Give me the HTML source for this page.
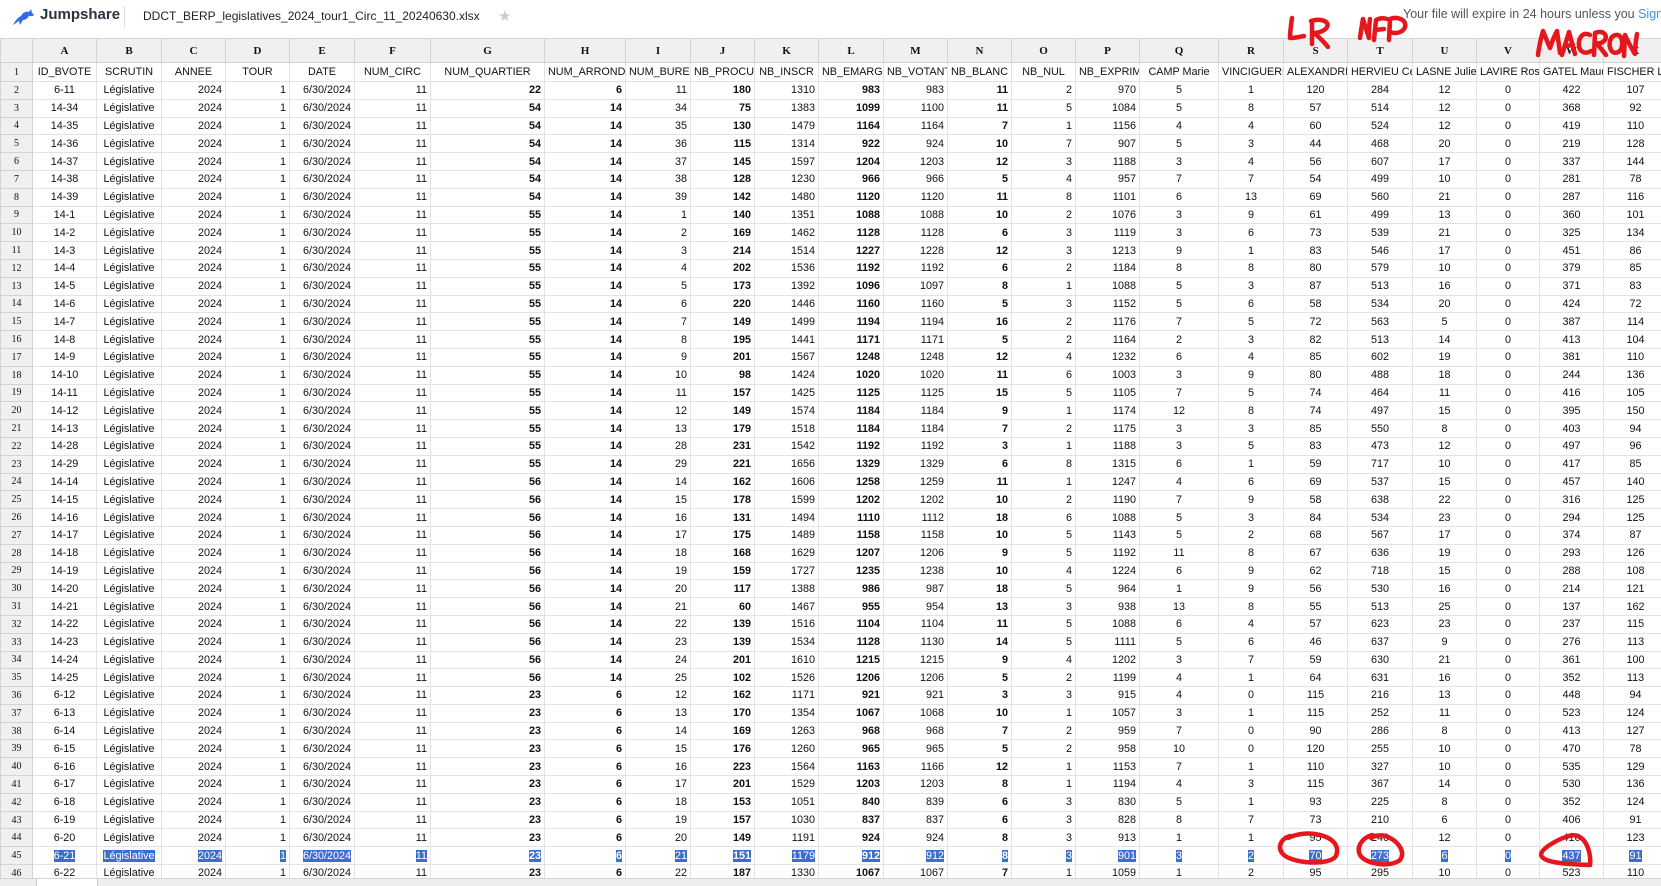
<!DOCTYPE html>
<html><head><meta charset="utf-8">
<style>
html,body{margin:0;padding:0;width:1661px;height:885px;overflow:hidden;background:#fff;font-family:"Liberation Sans",sans-serif;}
#top{position:absolute;left:0;top:0;width:1661px;height:37px;background:#fff;}
#logo{position:absolute;left:40px;top:6px;font-size:15px;font-weight:bold;color:#2a3340;}
#div{position:absolute;left:124px;top:6px;width:1px;height:22px;background:#ddd;}
#fname{position:absolute;left:143px;top:9px;font-size:12px;color:#222;}
#star{position:absolute;left:498px;top:7px;font-size:15px;color:#ccc;}
#exp{position:absolute;left:1403px;top:7px;font-size:12.5px;color:#555;white-space:nowrap;}
#exp span{color:#4a90e2;}
#grid{position:absolute;left:0;top:38px;width:1661px;height:840px;overflow:hidden;}
table{border-collapse:collapse;table-layout:fixed;width:1667px;}
td,th{border:1px solid #e3e3e3;padding:0 3px;font-size:10.8px;white-space:nowrap;overflow:hidden;color:#111;font-weight:normal;}
tr{height:17.8px;}
tr.h{height:24px;}
tr.h th{background:#f0f0f0;border:1px solid #d3d3d3;font-family:"Liberation Serif",serif;font-weight:bold;font-size:11px;}
tr.r1{height:19px;}
th{background:#f0f0f0;border-color:#d3d3d3;font-family:"Liberation Serif",serif;font-size:10px;text-align:center;}
td:nth-child(2),td:nth-child(3){text-align:center;}
td{text-align:right;}
td:nth-child(n+18){text-align:center;}
td:nth-child(8),td:nth-child(9),td:nth-child(11),td:nth-child(13),td:nth-child(15){font-weight:bold;}
tr.r1 td{text-align:center;font-weight:normal;}
tr.s td span{background:#3a6fd1;color:#fff;}
#tabs{position:absolute;left:0;top:878px;width:1661px;height:7px;background:#eee;border-top:1px solid #d3d3d3;}
#tab{position:absolute;left:36px;top:0;width:60px;height:7px;background:#fff;border-left:1px solid #ccc;border-right:1px solid #ccc;}
svg.ann{position:absolute;left:0;top:0;width:1661px;height:885px;pointer-events:none;}
</style></head><body>
<div id="top">
<svg style="position:absolute;left:11px;top:7px" width="24" height="20" viewBox="0 0 24 20"><path d="M2 18 C5 12 8 10 10 9 C12 5 16 4 18 5 L20 2 L21 6 C23 7 23 8 22 9 L18 9 C16 12 14 13 12 13 L9 18 L8 14 C6 15 4 17 2 18 Z" fill="#2f6fe0"/></svg>
<div id="logo">Jumpshare</div>
<div id="div"></div>
<div id="fname">DDCT_BERP_legislatives_2024_tour1_Circ_11_20240630.xlsx</div>
<div id="star">★</div>
<div id="exp">Your file will expire in 24 hours unless you <span>Sign Up</span></div>
</div>
<div id="grid">
<table>
<colgroup><col style="width:32px"><col style="width:64px"><col style="width:65px"><col style="width:64px"><col style="width:64px"><col style="width:65px"><col style="width:76px"><col style="width:114px"><col style="width:81px"><col style="width:65px"><col style="width:64px"><col style="width:64px"><col style="width:65px"><col style="width:64px"><col style="width:64px"><col style="width:64px"><col style="width:64px"><col style="width:79px"><col style="width:65px"><col style="width:64px"><col style="width:65px"><col style="width:64px"><col style="width:63px"><col style="width:64px"><col style="width:64px"></colgroup>
<tr class="h"><th></th><th>A</th><th>B</th><th>C</th><th>D</th><th>E</th><th>F</th><th>G</th><th>H</th><th>I</th><th>J</th><th>K</th><th>L</th><th>M</th><th>N</th><th>O</th><th>P</th><th>Q</th><th>R</th><th>S</th><th>T</th><th>U</th><th>V</th><th>W</th><th>X</th></tr>
<tr class="r1"><th>1</th><td>ID_BVOTE<td>SCRUTIN<td>ANNEE<td>TOUR<td>DATE<td>NUM_CIRC<td>NUM_QUARTIER<td>NUM_ARROND<td>NUM_BUREA<td>NB_PROCU<td>NB_INSCR<td>NB_EMARG<td>NB_VOTANT<td>NB_BLANC<td>NB_NUL<td>NB_EXPRIM<td>CAMP Marie<td>VINCIGUERR<td>ALEXANDRE<td>HERVIEU Cél<td>LASNE Julie<td>LAVIRE Rose<td>GATEL Maud<td>FISCHER Lind</tr>
<tr><th>2</th><td>6-11<td>Législative<td>2024<td>1<td>6/30/2024<td>11<td>22<td>6<td>11<td>180<td>1310<td>983<td>983<td>11<td>2<td>970<td>5<td>1<td>120<td>284<td>12<td>0<td>422<td>107</tr>
<tr><th>3</th><td>14-34<td>Législative<td>2024<td>1<td>6/30/2024<td>11<td>54<td>14<td>34<td>75<td>1383<td>1099<td>1100<td>11<td>5<td>1084<td>5<td>8<td>57<td>514<td>12<td>0<td>368<td>92</tr>
<tr><th>4</th><td>14-35<td>Législative<td>2024<td>1<td>6/30/2024<td>11<td>54<td>14<td>35<td>130<td>1479<td>1164<td>1164<td>7<td>1<td>1156<td>4<td>4<td>60<td>524<td>12<td>0<td>419<td>110</tr>
<tr><th>5</th><td>14-36<td>Législative<td>2024<td>1<td>6/30/2024<td>11<td>54<td>14<td>36<td>115<td>1314<td>922<td>924<td>10<td>7<td>907<td>5<td>3<td>44<td>468<td>20<td>0<td>219<td>128</tr>
<tr><th>6</th><td>14-37<td>Législative<td>2024<td>1<td>6/30/2024<td>11<td>54<td>14<td>37<td>145<td>1597<td>1204<td>1203<td>12<td>3<td>1188<td>3<td>4<td>56<td>607<td>17<td>0<td>337<td>144</tr>
<tr><th>7</th><td>14-38<td>Législative<td>2024<td>1<td>6/30/2024<td>11<td>54<td>14<td>38<td>128<td>1230<td>966<td>966<td>5<td>4<td>957<td>7<td>7<td>54<td>499<td>10<td>0<td>281<td>78</tr>
<tr><th>8</th><td>14-39<td>Législative<td>2024<td>1<td>6/30/2024<td>11<td>54<td>14<td>39<td>142<td>1480<td>1120<td>1120<td>11<td>8<td>1101<td>6<td>13<td>69<td>560<td>21<td>0<td>287<td>116</tr>
<tr><th>9</th><td>14-1<td>Législative<td>2024<td>1<td>6/30/2024<td>11<td>55<td>14<td>1<td>140<td>1351<td>1088<td>1088<td>10<td>2<td>1076<td>3<td>9<td>61<td>499<td>13<td>0<td>360<td>101</tr>
<tr><th>10</th><td>14-2<td>Législative<td>2024<td>1<td>6/30/2024<td>11<td>55<td>14<td>2<td>169<td>1462<td>1128<td>1128<td>6<td>3<td>1119<td>3<td>6<td>73<td>539<td>21<td>0<td>325<td>134</tr>
<tr><th>11</th><td>14-3<td>Législative<td>2024<td>1<td>6/30/2024<td>11<td>55<td>14<td>3<td>214<td>1514<td>1227<td>1228<td>12<td>3<td>1213<td>9<td>1<td>83<td>546<td>17<td>0<td>451<td>86</tr>
<tr><th>12</th><td>14-4<td>Législative<td>2024<td>1<td>6/30/2024<td>11<td>55<td>14<td>4<td>202<td>1536<td>1192<td>1192<td>6<td>2<td>1184<td>8<td>8<td>80<td>579<td>10<td>0<td>379<td>85</tr>
<tr><th>13</th><td>14-5<td>Législative<td>2024<td>1<td>6/30/2024<td>11<td>55<td>14<td>5<td>173<td>1392<td>1096<td>1097<td>8<td>1<td>1088<td>5<td>3<td>87<td>513<td>16<td>0<td>371<td>83</tr>
<tr><th>14</th><td>14-6<td>Législative<td>2024<td>1<td>6/30/2024<td>11<td>55<td>14<td>6<td>220<td>1446<td>1160<td>1160<td>5<td>3<td>1152<td>5<td>6<td>58<td>534<td>20<td>0<td>424<td>72</tr>
<tr><th>15</th><td>14-7<td>Législative<td>2024<td>1<td>6/30/2024<td>11<td>55<td>14<td>7<td>149<td>1499<td>1194<td>1194<td>16<td>2<td>1176<td>7<td>5<td>72<td>563<td>5<td>0<td>387<td>114</tr>
<tr><th>16</th><td>14-8<td>Législative<td>2024<td>1<td>6/30/2024<td>11<td>55<td>14<td>8<td>195<td>1441<td>1171<td>1171<td>5<td>2<td>1164<td>2<td>3<td>82<td>513<td>14<td>0<td>413<td>104</tr>
<tr><th>17</th><td>14-9<td>Législative<td>2024<td>1<td>6/30/2024<td>11<td>55<td>14<td>9<td>201<td>1567<td>1248<td>1248<td>12<td>4<td>1232<td>6<td>4<td>85<td>602<td>19<td>0<td>381<td>110</tr>
<tr><th>18</th><td>14-10<td>Législative<td>2024<td>1<td>6/30/2024<td>11<td>55<td>14<td>10<td>98<td>1424<td>1020<td>1020<td>11<td>6<td>1003<td>3<td>9<td>80<td>488<td>18<td>0<td>244<td>136</tr>
<tr><th>19</th><td>14-11<td>Législative<td>2024<td>1<td>6/30/2024<td>11<td>55<td>14<td>11<td>157<td>1425<td>1125<td>1125<td>15<td>5<td>1105<td>7<td>5<td>74<td>464<td>11<td>0<td>416<td>105</tr>
<tr><th>20</th><td>14-12<td>Législative<td>2024<td>1<td>6/30/2024<td>11<td>55<td>14<td>12<td>149<td>1574<td>1184<td>1184<td>9<td>1<td>1174<td>12<td>8<td>74<td>497<td>15<td>0<td>395<td>150</tr>
<tr><th>21</th><td>14-13<td>Législative<td>2024<td>1<td>6/30/2024<td>11<td>55<td>14<td>13<td>179<td>1518<td>1184<td>1184<td>7<td>2<td>1175<td>3<td>3<td>85<td>550<td>8<td>0<td>403<td>94</tr>
<tr><th>22</th><td>14-28<td>Législative<td>2024<td>1<td>6/30/2024<td>11<td>55<td>14<td>28<td>231<td>1542<td>1192<td>1192<td>3<td>1<td>1188<td>3<td>5<td>83<td>473<td>12<td>0<td>497<td>96</tr>
<tr><th>23</th><td>14-29<td>Législative<td>2024<td>1<td>6/30/2024<td>11<td>55<td>14<td>29<td>221<td>1656<td>1329<td>1329<td>6<td>8<td>1315<td>6<td>1<td>59<td>717<td>10<td>0<td>417<td>85</tr>
<tr><th>24</th><td>14-14<td>Législative<td>2024<td>1<td>6/30/2024<td>11<td>56<td>14<td>14<td>162<td>1606<td>1258<td>1259<td>11<td>1<td>1247<td>4<td>6<td>69<td>537<td>15<td>0<td>457<td>140</tr>
<tr><th>25</th><td>14-15<td>Législative<td>2024<td>1<td>6/30/2024<td>11<td>56<td>14<td>15<td>178<td>1599<td>1202<td>1202<td>10<td>2<td>1190<td>7<td>9<td>58<td>638<td>22<td>0<td>316<td>125</tr>
<tr><th>26</th><td>14-16<td>Législative<td>2024<td>1<td>6/30/2024<td>11<td>56<td>14<td>16<td>131<td>1494<td>1110<td>1112<td>18<td>6<td>1088<td>5<td>3<td>84<td>534<td>23<td>0<td>294<td>125</tr>
<tr><th>27</th><td>14-17<td>Législative<td>2024<td>1<td>6/30/2024<td>11<td>56<td>14<td>17<td>175<td>1489<td>1158<td>1158<td>10<td>5<td>1143<td>5<td>2<td>68<td>567<td>17<td>0<td>374<td>87</tr>
<tr><th>28</th><td>14-18<td>Législative<td>2024<td>1<td>6/30/2024<td>11<td>56<td>14<td>18<td>168<td>1629<td>1207<td>1206<td>9<td>5<td>1192<td>11<td>8<td>67<td>636<td>19<td>0<td>293<td>126</tr>
<tr><th>29</th><td>14-19<td>Législative<td>2024<td>1<td>6/30/2024<td>11<td>56<td>14<td>19<td>159<td>1727<td>1235<td>1238<td>10<td>4<td>1224<td>6<td>9<td>62<td>718<td>15<td>0<td>288<td>108</tr>
<tr><th>30</th><td>14-20<td>Législative<td>2024<td>1<td>6/30/2024<td>11<td>56<td>14<td>20<td>117<td>1388<td>986<td>987<td>18<td>5<td>964<td>1<td>9<td>56<td>530<td>16<td>0<td>214<td>121</tr>
<tr><th>31</th><td>14-21<td>Législative<td>2024<td>1<td>6/30/2024<td>11<td>56<td>14<td>21<td>60<td>1467<td>955<td>954<td>13<td>3<td>938<td>13<td>8<td>55<td>513<td>25<td>0<td>137<td>162</tr>
<tr><th>32</th><td>14-22<td>Législative<td>2024<td>1<td>6/30/2024<td>11<td>56<td>14<td>22<td>139<td>1516<td>1104<td>1104<td>11<td>5<td>1088<td>6<td>4<td>57<td>623<td>23<td>0<td>237<td>115</tr>
<tr><th>33</th><td>14-23<td>Législative<td>2024<td>1<td>6/30/2024<td>11<td>56<td>14<td>23<td>139<td>1534<td>1128<td>1130<td>14<td>5<td>1111<td>5<td>6<td>46<td>637<td>9<td>0<td>276<td>113</tr>
<tr><th>34</th><td>14-24<td>Législative<td>2024<td>1<td>6/30/2024<td>11<td>56<td>14<td>24<td>201<td>1610<td>1215<td>1215<td>9<td>4<td>1202<td>3<td>7<td>59<td>630<td>21<td>0<td>361<td>100</tr>
<tr><th>35</th><td>14-25<td>Législative<td>2024<td>1<td>6/30/2024<td>11<td>56<td>14<td>25<td>102<td>1526<td>1206<td>1206<td>5<td>2<td>1199<td>4<td>1<td>64<td>631<td>16<td>0<td>352<td>113</tr>
<tr><th>36</th><td>6-12<td>Législative<td>2024<td>1<td>6/30/2024<td>11<td>23<td>6<td>12<td>162<td>1171<td>921<td>921<td>3<td>3<td>915<td>4<td>0<td>115<td>216<td>13<td>0<td>448<td>94</tr>
<tr><th>37</th><td>6-13<td>Législative<td>2024<td>1<td>6/30/2024<td>11<td>23<td>6<td>13<td>170<td>1354<td>1067<td>1068<td>10<td>1<td>1057<td>3<td>1<td>115<td>252<td>11<td>0<td>523<td>124</tr>
<tr><th>38</th><td>6-14<td>Législative<td>2024<td>1<td>6/30/2024<td>11<td>23<td>6<td>14<td>169<td>1263<td>968<td>968<td>7<td>2<td>959<td>7<td>0<td>90<td>286<td>8<td>0<td>413<td>127</tr>
<tr><th>39</th><td>6-15<td>Législative<td>2024<td>1<td>6/30/2024<td>11<td>23<td>6<td>15<td>176<td>1260<td>965<td>965<td>5<td>2<td>958<td>10<td>0<td>120<td>255<td>10<td>0<td>470<td>78</tr>
<tr><th>40</th><td>6-16<td>Législative<td>2024<td>1<td>6/30/2024<td>11<td>23<td>6<td>16<td>223<td>1564<td>1163<td>1166<td>12<td>1<td>1153<td>7<td>1<td>110<td>327<td>10<td>0<td>535<td>129</tr>
<tr><th>41</th><td>6-17<td>Législative<td>2024<td>1<td>6/30/2024<td>11<td>23<td>6<td>17<td>201<td>1529<td>1203<td>1203<td>8<td>1<td>1194<td>4<td>3<td>115<td>367<td>14<td>0<td>530<td>136</tr>
<tr><th>42</th><td>6-18<td>Législative<td>2024<td>1<td>6/30/2024<td>11<td>23<td>6<td>18<td>153<td>1051<td>840<td>839<td>6<td>3<td>830<td>5<td>1<td>93<td>225<td>8<td>0<td>352<td>124</tr>
<tr><th>43</th><td>6-19<td>Législative<td>2024<td>1<td>6/30/2024<td>11<td>23<td>6<td>19<td>157<td>1030<td>837<td>837<td>6<td>3<td>828<td>8<td>7<td>73<td>210<td>6<td>0<td>406<td>91</tr>
<tr><th>44</th><td>6-20<td>Législative<td>2024<td>1<td>6/30/2024<td>11<td>23<td>6<td>20<td>149<td>1191<td>924<td>924<td>8<td>3<td>913<td>1<td>1<td>95<td>240<td>12<td>0<td>416<td>123</tr>
<tr class="s"><th>45</th><td><span>6-21</span><td><span>Législative</span><td><span>2024</span><td><span>1</span><td><span>6/30/2024</span><td><span>11</span><td><span>23</span><td><span>6</span><td><span>21</span><td><span>151</span><td><span>1179</span><td><span>912</span><td><span>912</span><td><span>8</span><td><span>3</span><td><span>901</span><td><span>3</span><td><span>2</span><td><span>70</span><td><span>273</span><td><span>6</span><td><span>0</span><td><span>437</span><td><span>91</span></tr>
<tr><th>46</th><td>6-22<td>Législative<td>2024<td>1<td>6/30/2024<td>11<td>23<td>6<td>22<td>187<td>1330<td>1067<td>1067<td>7<td>1<td>1059<td>1<td>2<td>95<td>295<td>10<td>0<td>523<td>110</tr>
<tr><th>47</th><td><td><td><td><td><td><td><td><td><td><td><td><td><td><td><td><td><td><td><td><td><td><td><td></tr>
</table>
</div>
<div id="tabs"><div id="tab"></div></div>
<svg class="ann" viewBox="0 0 1661 885" fill="none" stroke="#e5161c" stroke-width="4.5" stroke-linecap="round" stroke-linejoin="round">
<path d="M1292 18 C1291 25 1290 32 1290 38 C1295 38 1299 37 1304 36"/>
<path d="M1312 22 L1312 44 M1311 21 C1320 18 1330 21 1327 27 C1325 31 1318 33 1314 33 C1319 37 1324 42 1328 47"/>
<path d="M1360 38 C1361 31 1362 24 1363 19 C1365 26 1367 32 1369 38 C1369 31 1369 25 1370 19"/>
<path d="M1374 40 L1376 20 C1380 18 1384 18 1387 19 M1375 30 L1384 29"/>
<path d="M1389 40 L1390 19 C1398 16 1407 20 1405 27 C1403 33 1395 34 1390 32"/>
<path d="M1538 55 C1539 46 1541 38 1543 31 C1546 38 1548 44 1550 48 C1552 42 1554 36 1557 31 C1558 38 1559 46 1560 53"/>
<path d="M1562 55 L1569 32 L1575 54 M1565 46 L1573 45"/>
<path d="M1590 35 C1583 31 1578 38 1579 46 C1580 53 1586 54 1591 51"/>
<path d="M1594 55 L1595 33 C1602 30 1608 34 1605 40 C1603 43 1598 44 1596 43 C1600 47 1603 51 1606 55"/>
<path d="M1617 35 C1610 35 1608 44 1611 50 C1614 55 1621 53 1622 46 C1623 39 1620 34 1616 35"/>
<path d="M1624 56 L1625 35 C1628 42 1632 49 1635 54 C1635 47 1636 40 1637 34"/>
<path d="M1290 836 C1282 838 1277 846 1282 853 C1290 864 1330 866 1336 856 C1340 846 1333 838 1320 835 C1308 832 1296 834 1288 838"/>
<path d="M1372 835 C1362 838 1356 847 1360 855 C1365 864 1390 868 1400 860 C1406 852 1398 842 1390 838 C1383 834 1376 835 1371 838"/>
<path d="M1572 835 C1560 838 1541 848 1541 855 C1543 862 1560 864 1590 865 C1591 858 1589 848 1585 842 C1581 836 1574 834 1570 836"/>
</svg>
</body></html>
